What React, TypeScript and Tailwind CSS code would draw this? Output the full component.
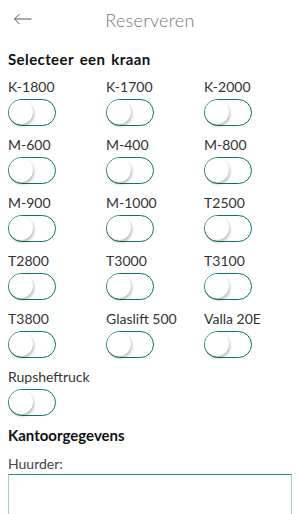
import React from 'react'

const CRANES = [
  'K-1800', 'K-1700', 'K-2000',
  'M-600', 'M-400', 'M-800',
  'M-900', 'M-1000', 'T2500',
  'T2800', 'T3000', 'T3100',
  'T3800', 'Glaslift 500', 'Valla 20E',
  'Rupsheftruck',
]

function Toggle({ on = false }: { on?: boolean }) {
  return (
    <div className="relative w-[48px] h-[27px] rounded-full border-[1.5px] border-[#08775f] bg-white">
      <div
        className={`absolute top-0 ${on ? 'right-0' : 'left-0'} w-[24px] h-[24px] rounded-full bg-white shadow-[1px_2px_3px_rgba(0,0,0,0.28)]`}
      />
    </div>
  )
}

export default function App() {
  return (
    <div className="w-[300px] h-[514px] overflow-hidden bg-white text-[#222] font-['Lato','Liberation_Sans',sans-serif]">
      {/* header */}
      <div className="relative h-10 flex items-center justify-center">
        <button className="absolute left-[13px] top-[13px] text-[#555]">
          <svg width="19" height="12" viewBox="0 0 19 12" fill="none" stroke="currentColor" strokeWidth="1">
            <path d="M1.5 6H18.5" />
            <path d="M6.5 1L1.5 6L6.5 11" />
          </svg>
        </button>
        <h1 className="text-[18px] font-light text-[#777] tracking-[0.3px]">Reserveren</h1>
      </div>

      <div className="px-2">
        <h2 className="mt-[9px] text-[15px] leading-5 font-bold text-[#111] tracking-[0.4px] [word-spacing:2px]">Selecteer een kraan</h2>

        <div className="mt-2 grid grid-cols-[98px_98px_1fr]">
          {CRANES.map((c) => (
            <div key={c} className="h-[58px] flex flex-col">
              <span className="text-[14px] leading-5 text-[#333]">{c}</span>
              <div className="mt-[2px]">
                <Toggle />
              </div>
            </div>
          ))}
        </div>

        <h2 className="text-[15px] leading-5 font-bold text-[#111]">Kantoorgegevens</h2>
        <label className="block mt-[9px] text-[14px] leading-5 text-[#444]">Huurder:</label>
        <div className="h-[60px] w-[284px] border border-[#a4d0c6] border-t-[#2f8c79]" />
      </div>
    </div>
  )
}
